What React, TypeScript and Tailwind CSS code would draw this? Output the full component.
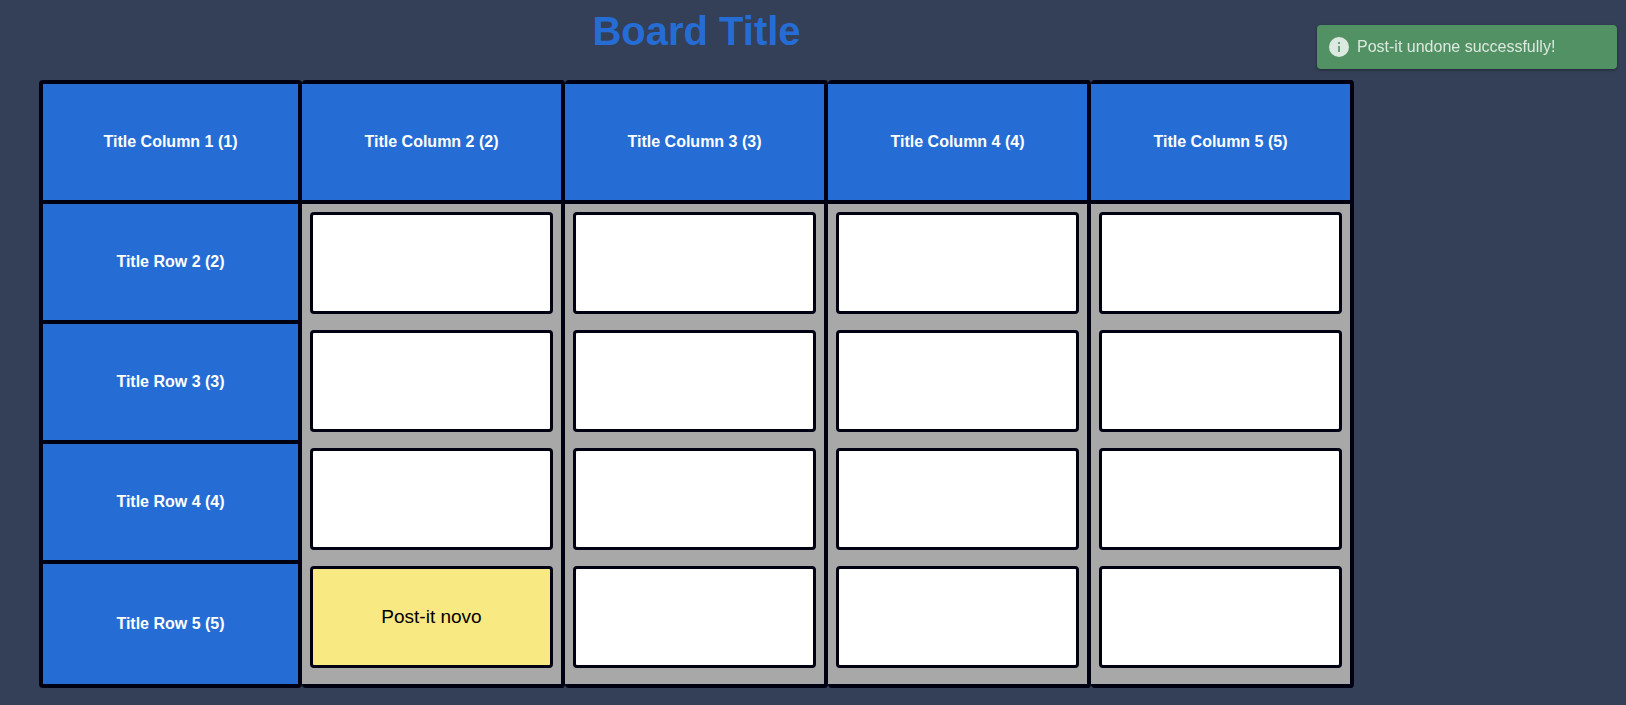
const columns = [1, 2, 3, 4, 5];
const rows = [2, 3, 4, 5];

const notes: Record<string, string> = { "5-2": "Post-it novo" };

function Toast({ message }: { message: string }) {
  return (
    <div
      role="status"
      className="fixed top-[25px] right-[9px] flex h-11 w-[300px] items-center gap-2 rounded bg-[#529163] pl-3 text-[#dce9e0] shadow-[0_1px_3px_rgba(0,0,0,0.4)]"
    >
      <svg viewBox="0 0 20 20" className="size-5" aria-hidden="true">
        <circle cx="10" cy="10" r="10" fill="#dce9e0" />
        <rect x="9" y="5" width="2" height="2" fill="#6ba179" />
        <rect x="9" y="9" width="2" height="6" fill="#6ba179" />
      </svg>
      <p>{message}</p>
    </div>
  );
}

function Heading({ children, last }: { children: string; last?: boolean }) {
  return (
    <h2
      className={`flex h-[120px] items-center justify-center border-[#000013] bg-[#256dd4] font-bold text-white ${
        last ? "" : "border-b-4"
      }`}
    >
      {children}
    </h2>
  );
}

export default function App() {
  return (
    <main className="min-h-screen bg-[#344057] px-[39px] pb-4 font-['Liberation_Sans',Arial,sans-serif] text-base leading-6">
      <div className="w-fit">
        <h1 className="pb-[18px] text-center text-[40px] leading-[62px] font-bold text-[#256dd4]">
          Board Title
        </h1>
        <div className="flex">
          {columns.map((column) => (
            <section
              key={column}
              className={`w-[263px] rounded border-4 border-[#000013] bg-[#a8a8a8] ${
                column === 1 ? "" : "border-l-0"
              }`}
            >
              <Heading>{`Title Column ${column} (${column})`}</Heading>
              {column === 1
                ? rows.map((row) => (
                    <Heading key={row} last={row === 5}>{`Title Row ${row} (${row})`}</Heading>
                  ))
                : (
                  <div className="flex flex-col gap-4 p-2 pb-4">
                    {rows.map((row) => {
                      const note = notes[`${row}-${column}`];
                      return (
                        <div
                          key={row}
                          className={`flex h-[102px] items-center justify-center rounded border-3 border-[#000013] text-[19px] text-black ${
                            note ? "bg-[#f8e983]" : "bg-white"
                          }`}
                        >
                          {note}
                        </div>
                      );
                    })}
                  </div>
                )}
            </section>
          ))}
        </div>
      </div>
      <Toast message="Post-it undone successfully!" />
    </main>
  );
}
